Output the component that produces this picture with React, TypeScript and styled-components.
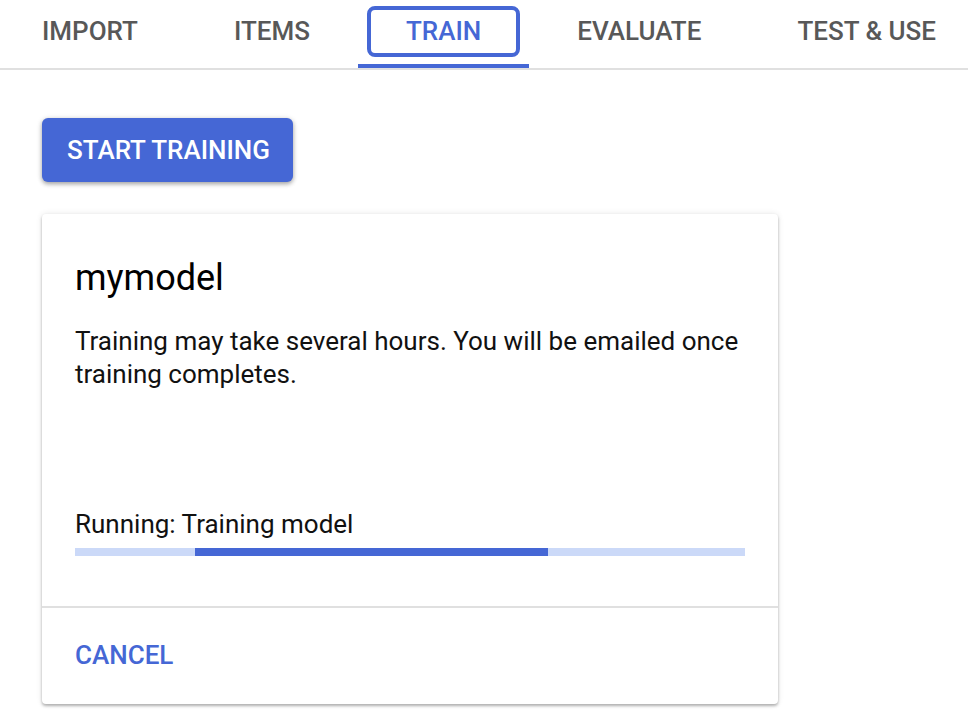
import React from "react";
import styled, { createGlobalStyle } from "styled-components";

const Global = createGlobalStyle`
  html, body { margin: 0; padding: 0; background: #ffffff; }
  body { font-family: Roboto, "Noto Sans", "Liberation Sans", sans-serif; overflow: hidden; }
`;

const BLUE = "#4567d5";

const Page = styled.div`
  width: 968px;
  height: 720px;
  overflow: hidden;
  background: #fff;
`;

const TabBar = styled.nav`
  display: flex;
  border-bottom: 2px solid #e0e0e0;
  overflow: hidden;
`;

const TabStrip = styled.div`
  display: flex;
  margin-left: -6px;
`;

const Tab = styled.div<{ $active?: boolean }>`
  flex: none;
  height: 68px;
  padding: 6px 9px 0;
  box-sizing: border-box;
  border-bottom: 4px solid ${(p) => (p.$active ? BLUE : "transparent")};
`;

const TabLabel = styled.div<{ $active?: boolean }>`
  box-sizing: border-box;
  height: 51px;
  padding: 0 35px;
  border: 4px solid ${(p) => (p.$active ? BLUE : "transparent")};
  border-radius: 8px;
  font-size: 26px;
  font-weight: 500;
  line-height: 43px;
  text-transform: uppercase;
  white-space: nowrap;
  color: ${(p) => (p.$active ? BLUE : "#585858")};
`;

const Content = styled.main`
  padding: 48px 42px 0;
  display: flex;
  flex-direction: column;
  align-items: flex-start;
`;

const PrimaryButton = styled.button`
  height: 64px;
  padding: 0 23px 0 25px;
  border: none;
  border-radius: 6px;
  background: ${BLUE};
  color: #fff;
  font-family: inherit;
  font-size: 26px;
  font-weight: 500;
  box-shadow: 0 2px 4px rgba(0, 0, 0, 0.3), 0 1px 6px rgba(0, 0, 0, 0.12);
  cursor: pointer;
`;

const Card = styled.section`
  margin-top: 32px;
  width: 736px;
  border-radius: 4px;
  background: #fff;
  box-shadow: 0 2px 3px rgba(0, 0, 0, 0.28), 0 0 6px rgba(0, 0, 0, 0.1);
`;

const CardBody = styled.div`
  padding: 42px 33px 50px;
`;

const Title = styled.h2`
  margin: 0;
  font-size: 36px;
  font-weight: 400;
  line-height: 44px;
  color: #000;
`;

const Text = styled.p<{ $gap: number }>`
  margin: ${(p) => p.$gap}px 0 0;
  font-size: 26px;
  line-height: 33px;
  color: #111;
`;

const Track = styled.div`
  margin-top: 7px;
  height: 8px;
  background: #cbd9f8;
  display: flex;
`;

const Bar = styled.div`
  height: 100%;
  background: ${BLUE};
`;

const Divider = styled.hr`
  margin: 0;
  border: none;
  height: 2px;
  background: #e0e0e0;
`;

const CardFooter = styled.div`
  padding: 31px 33px 33px;
`;

const TextButton = styled.button`
  display: block;
  padding: 0;
  border: none;
  background: none;
  font-family: inherit;
  font-size: 26px;
  font-weight: 500;
  line-height: 32px;
  color: ${BLUE};
  cursor: pointer;
`;

const tabs = ["Import", "Items", "Train", "Evaluate", "Test & Use"];

export default function App() {
  const progress = { start: 17.9, width: 52.7 };
  return (
    <Page>
      <Global />
      <TabBar>
        <TabStrip>
          {tabs.map((t) => (
            <Tab key={t} $active={t === "Train"}>
              <TabLabel $active={t === "Train"}>{t}</TabLabel>
            </Tab>
          ))}
        </TabStrip>
      </TabBar>
      <Content>
        <PrimaryButton>START TRAINING</PrimaryButton>
        <Card>
          <CardBody>
            <Title>mymodel</Title>
            <Text $gap={25}>
              Training may take several hours. You will be emailed once training completes.
            </Text>
            <Text $gap={117}>Running: Training model</Text>
            <Track>
              <Bar style={{ marginLeft: `${progress.start}%`, width: `${progress.width}%` }} />
            </Track>
          </CardBody>
          <Divider />
          <CardFooter>
            <TextButton>CANCEL</TextButton>
          </CardFooter>
        </Card>
      </Content>
    </Page>
  );
}
